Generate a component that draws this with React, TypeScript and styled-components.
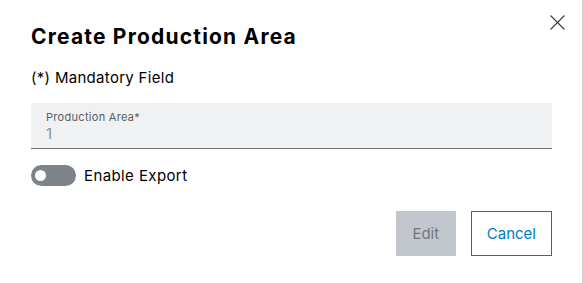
import React, { useState } from "react";
import styled, { createGlobalStyle } from "styled-components";

const GlobalStyle = createGlobalStyle`
  html, body {
    margin: 0;
    padding: 0;
    background: #ffffff;
  }
  body {
    font-family: Inter, "Noto Sans", sans-serif;
    color: #000000;
  }
`;

const Dialog = {
  Frame: styled.div`
    position: relative;
    box-sizing: border-box;
    width: 584px;
    height: 283px;
    background: #ffffff;
    border-right: 2px solid #d0d1d2;
    padding: 23px 30px 0 31px;
    display: flex;
    flex-direction: column;
  `,
  Title: styled.h2`
    margin: 0;
    font-size: 21px;
    line-height: 28px;
    font-weight: 700;
    letter-spacing: 1.2px;
    color: #000000;
  `,
  Close: styled.button`
    position: absolute;
    top: 15px;
    right: 17px;
    width: 15px;
    height: 15px;
    padding: 0;
    border: 0;
    background: transparent;
    cursor: pointer;
    display: flex;
  `,
  Hint: styled.p`
    margin: 17px 0 0 0;
    font-size: 15px;
    line-height: 20px;
    letter-spacing: 0.3px;
    color: #000000;
  `,
  Body: styled.div`
    display: flex;
    flex-direction: column;
    margin-top: 15px;
  `,
  Footer: styled.div`
    display: flex;
    justify-content: flex-end;
    gap: 15px;
    margin-top: 25px;
  `,
};

const Field = {
  Box: styled.label`
    box-sizing: border-box;
    display: flex;
    flex-direction: column;
    height: 46px;
    background: #eff1f2;
    border-bottom: 1px solid #71767c;
    padding: 7px 15px 0 15px;
  `,
  Label: styled.span`
    font-size: 11px;
    line-height: 14px;
    letter-spacing: 0.3px;
    color: #595e62;
  `,
  Value: styled.span`
    font-size: 15px;
    line-height: 20px;
    color: #8a9097;
  `,
};

const Toggle = {
  Row: styled.div`
    display: flex;
    align-items: center;
    gap: 8px;
    margin-top: 16px;
  `,
  Track: styled.button<{ $on: boolean }>`
    position: relative;
    width: 45px;
    height: 21px;
    border: 0;
    padding: 0;
    border-radius: 11px;
    background: ${(p) => (p.$on ? "#007bc0" : "#7d8389")};
    cursor: pointer;
  `,
  Knob: styled.span<{ $on: boolean }>`
    position: absolute;
    top: 5px;
    left: ${(p) => (p.$on ? "29px" : "4px")};
    width: 11px;
    height: 11px;
    border-radius: 50%;
    background: #ffffff;
  `,
  Text: styled.span`
    font-size: 15px;
    line-height: 20px;
    letter-spacing: 0.4px;
    color: #000000;
  `,
};

const Button = styled.button<{ $variant: "disabled" | "outline" }>`
  box-sizing: border-box;
  height: 45px;
  padding: 0 15px;
  font-family: inherit;
  font-size: 15px;
  cursor: pointer;
  border: 1px solid ${(p) => (p.$variant === "outline" ? "#007bc0" : "#c1c7cc")};
  background: ${(p) => (p.$variant === "outline" ? "#ffffff" : "#c1c7cc")};
  color: ${(p) => (p.$variant === "outline" ? "#007bc0" : "#71767c")};
  min-width: ${(p) => (p.$variant === "outline" ? "80px" : "60px")};
`;

export default function App() {
  const [exportOn, setExportOn] = useState(false);
  return (
    <>
      <GlobalStyle />
      <Dialog.Frame>
        <Dialog.Close aria-label="Close">
          <svg width="15" height="15" viewBox="0 0 15 15">
            <path d="M0.5 0.5 L14.5 14.5 M14.5 0.5 L0.5 14.5" stroke="#3a3d40" strokeWidth="1.1" />
          </svg>
        </Dialog.Close>
        <Dialog.Title>Create Production Area</Dialog.Title>
        <Dialog.Hint>(*) Mandatory Field</Dialog.Hint>
        <Dialog.Body>
          <Field.Box>
            <Field.Label>Production Area*</Field.Label>
            <Field.Value>1</Field.Value>
          </Field.Box>
          <Toggle.Row>
            <Toggle.Track $on={exportOn} onClick={() => setExportOn(!exportOn)}>
              <Toggle.Knob $on={exportOn} />
            </Toggle.Track>
            <Toggle.Text>Enable Export</Toggle.Text>
          </Toggle.Row>
        </Dialog.Body>
        <Dialog.Footer>
          <Button $variant="disabled">Edit</Button>
          <Button $variant="outline">Cancel</Button>
        </Dialog.Footer>
      </Dialog.Frame>
    </>
  );
}
